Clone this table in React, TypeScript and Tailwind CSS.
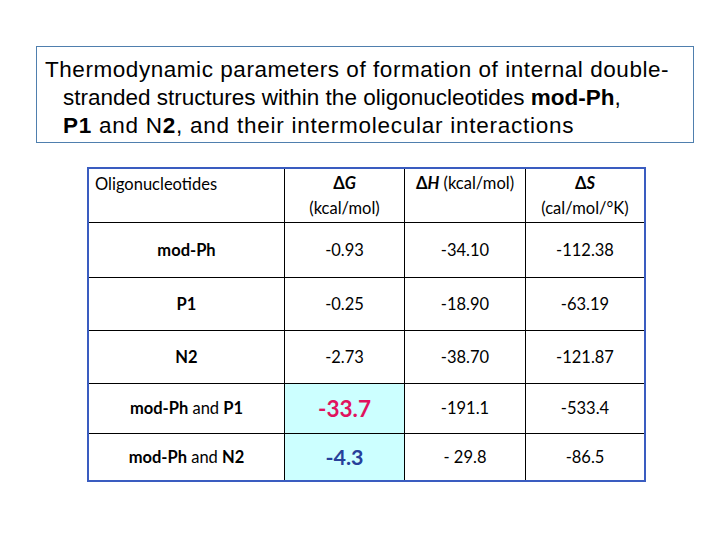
import React from "react";

const cal = { fontFamily: "Lato, 'Open Sans', sans-serif" };

type Row = { label: React.ReactNode; g: React.ReactNode; h: string; s: string; hl?: boolean };

const rows: Row[] = [
  { label: <b>mod-Ph</b>, g: "-0.93", h: "-34.10", s: "-112.38" },
  { label: <b>P1</b>, g: "-0.25", h: "-18.90", s: "-63.19" },
  { label: <b>N2</b>, g: "-2.73", h: "-38.70", s: "-121.87" },
  {
    label: (
      <span>
        <b>mod-Ph</b> and <b>P1</b>
      </span>
    ),
    g: <span className="text-[22.5px] font-bold text-[#e0125e]">-33.7</span>,
    h: "-191.1",
    s: "-533.4",
    hl: true,
  },
  {
    label: (
      <span>
        <b>mod-Ph</b> and <b>N2</b>
      </span>
    ),
    g: <span className="text-[21.5px] font-bold text-[#27409a]">-4.3</span>,
    h: "- 29.8",
    s: "-86.5",
    hl: true,
  },
];

const heights = ["h-[55px]", "h-[53px]", "h-[53px]", "h-[50px]", "h-[46px]"];

export default function App() {
  return (
    <div className="w-[720px] h-[540px] bg-white overflow-hidden">
      <div
        className="ml-[36px] mt-[46px] w-[658px] h-[97px] border border-[#4f7fae] pl-[8px] pt-[9px] text-[22.5px] leading-[28px] text-black whitespace-nowrap"
        style={{ fontFamily: "'Liberation Sans', Arial, sans-serif" }}
      >
        <div className="tracking-[0.55px]">Thermodynamic parameters of formation of internal double-</div>
        <div className="pl-[18px]">
          stranded structures within the oligonucleotides <b>mod-Ph</b>,
        </div>
        <div className="pl-[18px] tracking-[0.75px]">
          <b>P1</b> and N<b>2</b>, and their intermolecular interactions
        </div>
      </div>

      <div
        className="ml-[87px] mt-[24px] w-[559px] border-2 border-[#3a5cc0] text-[16.5px] text-black"
        style={cal}
      >
        <div className="grid grid-cols-[196px_120px_121px_118px] h-[54px] border-b border-black">
          <div className="pl-[6px] pt-[3px] leading-[25px] border-r border-black">Oligonucleotides</div>
          <div className="text-center pt-[2px] leading-[25px] border-r border-black">
            <div>
              <b>Δ<i>G</i></b>
            </div>
            <div>(kcal/mol)</div>
          </div>
          <div className="text-center pt-[2px] leading-[25px] border-r border-black">
            <b>Δ<i>H</i></b> (kcal/mol)
          </div>
          <div className="text-center pt-[2px] leading-[25px]">
            <div>
              <b>Δ<i>S</i></b>
            </div>
            <div>(cal/mol/°K)</div>
          </div>
        </div>
        {rows.map((r, i) => (
          <div
            key={i}
            className={`grid grid-cols-[196px_120px_121px_118px] ${heights[i]} ${
              i < rows.length - 1 ? "border-b border-black" : ""
            }`}
          >
            <div className="flex items-center justify-center border-r border-black">{r.label}</div>
            <div
              className={`flex items-center justify-center border-r border-black ${
                r.hl ? "bg-[#ccffff]" : ""
              }`}
            >
              {r.g}
            </div>
            <div className="flex items-center justify-center border-r border-black">{r.h}</div>
            <div className="flex items-center justify-center">{r.s}</div>
          </div>
        ))}
      </div>
    </div>
  );
}
